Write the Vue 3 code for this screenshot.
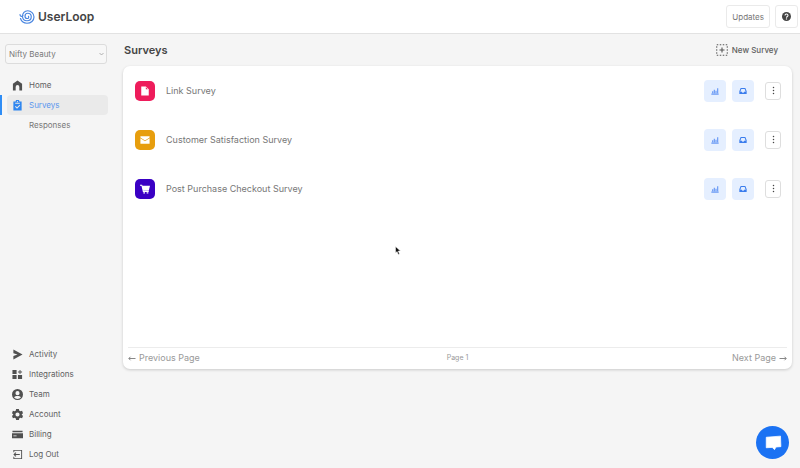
<script setup>
import { ref } from 'vue'

const shop = ref('Nifty Beauty')
const page = ref(1)

const mainLinks = [
  { label: 'Home', icon: 'M12 1 2 8v15h6v-8a4 4 0 0 1 8 0v8h6V8z' },
  {
    label: 'Surveys',
    active: true,
    icon: 'M21 3h-5a4 4 0 0 0-8 0H3v20h18zM12 2a1.400 1.400 0 1 1 0 2.800 1.400 1.400 0 0 1 0-2.800zM7 6h10v2H7zm4 13-4.500-4.500L8 13l3 3 5.500-5.500L18 12z'
  },
  { label: 'Responses' }
]

const bottomLinks = [
  { label: 'Activity', icon: 'M3 1v8l9 3-9 3v8l20-11z' },
  { label: 'Integrations', icon: 'M1 2h9v9H1zM1 13h9v9H1zM13 13h9v9h-9zM16.500 2h2v3.500H22v2h-3.500V11h-2V7.500H13v-2h3.500z' },
  { label: 'Team', icon: 'M12 0a12 12 0 1 0 0 24 12 12 0 0 0 0-24zm0 4.500a4.500 4.500 0 1 1 0 9 4.500 4.500 0 0 1 0-9zM4.500 18c1.500-2 4.500-3 7.500-3s6 1 7.500 3c-2 2.500-4.500 3.600-7.500 3.600S6.500 20.500 4.500 18z' },
  { label: 'Account', icon: 'M9 0h6l1 4 2 1 4-1 2 5-3 3 3 3-2 5-4-1-2 1-1 4H9l-1-4-2-1-4 1-2-5 3-3-3-3 2-5 4 1 2-1zm3 7.500a4.500 4.500 0 1 0 0 9 4.500 4.500 0 0 0 0-9z' },
  { label: 'Billing', icon: 'M1 4h22v3H1zM0 9h24v11H0zM3 14v2h7v-2z' },
  { label: 'Log Out', icon: 'M3 2h19v20H3v-5h2v3h15V4H5v3H3zM8 7l1.500 1.500L7 11h10v2H7l2.500 2.500L8 17l-5-5z' }
]

const surveys = [
  { name: 'Link Survey', color: '#ee1c5b', icon: 'M3 1h11l7 7v15H3zM14 3v5h5z' },
  { name: 'Customer Satisfaction Survey', color: '#e79e0e', icon: 'M1 3h22v3l-11 7L1 6zM1 8l11 7 11-7v13H1z' },
  { name: 'Post Purchase Checkout Survey', color: '#3a00c4', icon: 'M0 2h5l1 2h18l-3 12H8l1 1h12v2H7L3.500 4H0zM8 20h4v3H8zM16 20h4v3h-4z' }
]
</script>

<template>
  <div class="app">
    <header class="topbar">
      <a href="#" class="logo">
        <svg viewBox="0 0 32 28" class="logo-mark">
          <path
            d="M2 9c0 4 4 5 6 2M3 17c2 6 7 9.500 13 9.500 8 0 14-5.500 14-12.500S24 1.500 17.500 1.500C11 1.500 7 7 7 12.500 7 18 11 21.500 16 21.500c5 0 8.500-3.500 8.500-8s-3-7-7-7-5.500 3-5.500 6 2 4.500 4.500 4.500S20 15.500 19 12.500"
            fill="none" stroke="#4a86e0" stroke-width="2.400" stroke-linecap="round"
          />
        </svg>
        <span>UserLoop</span>
      </a>
      <div class="top-actions">
        <button type="button" class="top-button">Updates</button>
        <button type="button" class="top-button help" aria-label="Help">
          <svg viewBox="0 0 24 24">
            <circle cx="12" cy="12" r="12" fill="#444" />
            <path d="M8 9.500C8 4 16 4 16 9c0 3-4 3-4 6" fill="none" stroke="#fff" stroke-width="2.800" />
            <circle cx="12" cy="18.500" r="1.800" fill="#fff" />
          </svg>
        </button>
      </div>
    </header>

    <div class="body">
      <aside class="sidebar">
        <div class="shop-picker">
          <select v-model="shop" aria-label="Shop">
            <option>Nifty Beauty</option>
          </select>
          <svg viewBox="0 0 10 6" class="chevron"><path d="m1 1 4 4 4-4" fill="none" stroke="#999" stroke-width="1.500" /></svg>
        </div>

        <nav class="nav">
          <a v-for="link in mainLinks" :key="link.label" href="#" class="nav-link" :class="{ active: link.active, sub: !link.icon }">
            <span class="nav-icon">
              <svg v-if="link.icon" viewBox="0 0 24 24"><path :d="link.icon" fill="currentColor" fill-rule="evenodd" /></svg>
            </span>
            <span>{{ link.label }}</span>
          </a>
        </nav>

        <nav class="nav nav-bottom">
          <a v-for="link in bottomLinks" :key="link.label" href="#" class="nav-link">
            <span class="nav-icon">
              <svg viewBox="0 0 24 24"><path :d="link.icon" fill="currentColor" fill-rule="evenodd" /></svg>
            </span>
            <span>{{ link.label }}</span>
          </a>
        </nav>
      </aside>

      <main class="main">
        <div class="main-head">
          <h1>Surveys</h1>
          <button type="button" class="new-survey">
            <svg viewBox="0 0 24 24">
              <rect x="1.500" y="1.500" width="21" height="21" fill="none" stroke="#555" stroke-width="2" stroke-dasharray="3 3" />
              <path d="M12 7v10M7 12h10" stroke="#555" stroke-width="2.200" />
            </svg>
            <span>New Survey</span>
          </button>
        </div>

        <section class="card">
          <ul class="survey-list">
            <li v-for="survey in surveys" :key="survey.name" class="survey">
              <span class="survey-icon" :style="{ backgroundColor: survey.color }">
                <svg viewBox="0 0 24 24"><path :d="survey.icon" fill="#fff" fill-rule="evenodd" /></svg>
              </span>
              <a href="#" class="survey-name">{{ survey.name }}</a>
              <div class="survey-actions">
                <button type="button" class="action" aria-label="Results">
                  <svg viewBox="0 0 24 24"><path d="M1 21.500h22M5 19v-6M10 19V8M15 19v-8M20 19V4" fill="none" stroke="#6b9bf5" stroke-width="3.600" /></svg>
                </button>
                <button type="button" class="action" aria-label="Responses">
                  <svg viewBox="0 0 24 24"><path d="M5 3h14l4 10v8H1v-8zM7 6l-3 8h5l1 3h4l1-3h5l-3-8z" fill="#3b7ded" fill-rule="evenodd" /></svg>
                </button>
                <button type="button" class="more" aria-label="More">
                  <svg viewBox="0 0 4 12"><circle cx="2" cy="2" r="1" /><circle cx="2" cy="6" r="1" /><circle cx="2" cy="10" r="1" /></svg>
                </button>
              </div>
            </li>
          </ul>

          <footer class="pager">
            <button type="button" class="pager-link">
              <svg viewBox="0 0 16 10"><path d="M15 5H2M5 1.500 1.500 5 5 8.500" /></svg>
              <span>Previous Page</span>
            </button>
            <span class="pager-page">Page {{ page }}</span>
            <button type="button" class="pager-link next">
              <span>Next Page</span>
              <svg viewBox="0 0 16 10"><path d="M1 5h13M11 1.500 14.500 5 11 8.500" /></svg>
            </button>
          </footer>
        </section>
      </main>
    </div>

    <button type="button" class="chat" aria-label="Open chat">
      <svg viewBox="0 0 24 20"><path d="M3 3 22 1.500l.5 14-6.500.5-2 3.500-3-3-8 .5z" fill="#fff" stroke="#fff" stroke-linejoin="round" /></svg>
    </button>

    <!-- Mouse pointer -->
    <svg class="cursor" viewBox="0 0 12 18">
      <path d="M1 1v13l3-3 2.500 6 2.500-1-2.500-6H11z" fill="#111" stroke="#fff" />
    </svg>
  </div>
</template>

<style>
body { background: #f5f5f5; }
</style>

<style scoped>
*, *::after, *::before { box-sizing: border-box; margin: 0; padding: 0; }

.app {
  position: relative;
  display: flex; flex-direction: column;
  min-height: 100vh;
  background: #f5f5f5; color: #606060;
  font-family: 'Inter', 'Liberation Sans', sans-serif;
  font-size: 8px; line-height: 12px;
}
svg { display: block; }
a { color: inherit; text-decoration: none; }
button { font: inherit; color: inherit; background: none; border: none; cursor: pointer; }

/* Header */
.topbar {
  display: flex; align-items: center; justify-content: space-between;
  height: 34px; padding: 0 2px 0 19px;
  background: #fff; border-bottom: 1px solid #e2e2e2;
}
.logo {
  display: flex; align-items: center; gap: 3px;
  font-size: 12px; font-weight: 600; color: #444;
}
.logo-mark { width: 16px; height: 14px; }
.top-actions { display: flex; gap: 5px; }
.top-button {
  display: flex; align-items: center; justify-content: center;
  height: 23px; padding: 0 5px;
  background: #fff; border: 1px solid #eaeaea; border-radius: 3px; color: #777;
}
.help { width: 23px; }
.help svg { width: 9px; height: 9px; }

/* Sidebar */
.body { display: flex; flex: 1; }
.sidebar {
  display: flex; flex-direction: column; flex: none;
  width: 108px; padding: 10px 0 4px;
}
.shop-picker { position: relative; margin: 0 1px 11px 5px; }
.shop-picker select {
  display: block; appearance: none;
  width: 100%; height: 20px; padding: 0 12px 0 3px;
  font: inherit; color: #777;
  background: #f7f7f7; border: 1px solid #dcdcdc; border-radius: 3px;
}
.chevron { position: absolute; right: 3px; top: 8px; width: 5px; height: 4px; pointer-events: none; }
.nav-link {
  position: relative;
  display: flex; align-items: center; gap: 6px;
  height: 20px; margin-left: 7px; padding-left: 5px;
  border-radius: 4px;
}
.nav-icon { width: 11px; }
.nav-icon svg { width: 11px; height: 11px; color: #505050; }
.nav-link.active { background: #eaeaea; color: #5b97ee; }
.nav-link.active svg { color: #2f86f0; }
.nav-link.active::before {
  content: ''; position: absolute; left: -7px; top: 0;
  width: 2px; height: 100%; background: #2f8df5;
}
.nav-link.sub { color: #777; }
.nav-bottom { margin-top: auto; }

/* Survey list */
.main { flex: 1; min-width: 0; padding: 0 8px 0 15px; }
.main-head {
  display: flex; align-items: center; justify-content: space-between;
  height: 32px; padding: 0 14px 0 1px;
}
.main-head h1 { font-size: 11px; font-weight: 600; color: #444; }
.new-survey { display: flex; align-items: center; gap: 4px; font-weight: 500; }
.new-survey svg { width: 12px; height: 12px; }
.card {
  background: #fff; border-radius: 7px;
  box-shadow: 0 1px 3px rgba(0, 0, 0, 0.18);
  font-size: 9px;
}
.survey-list { min-height: 60vh; list-style: none; }
.survey {
  display: flex; align-items: center;
  height: 49px; padding: 0 11px 0 12px;
}
.survey-icon {
  display: flex; align-items: center; justify-content: center;
  width: 20px; height: 20px; border-radius: 5px;
}
.survey-icon svg { width: 10px; height: 10px; }
.survey-name { margin-left: 11px; color: #777; }
.survey-actions { display: flex; align-items: center; gap: 6px; margin-left: auto; }
.action {
  display: flex; align-items: center; justify-content: center;
  width: 22px; height: 22px; border-radius: 4px; background: #e5efff;
}
.action svg { width: 8px; height: 8px; }
.more {
  display: flex; align-items: center; justify-content: center;
  width: 16px; height: 18px; margin-left: 5px;
  border: 1px solid #dedede; border-radius: 3px;
}
.more svg { width: 3px; height: 9px; fill: #444; }

/* Pager */
.pager {
  display: grid; grid-template-columns: 1fr auto 1fr; align-items: center;
  height: 22px; margin: 0 5px; border-top: 1px solid #ececec;
  color: #999;
}
.pager-link { display: flex; align-items: center; gap: 3px; }
.pager-link.next { justify-self: end; }
.pager-link svg { width: 8px; height: 5px; fill: none; stroke: #888; stroke-width: 2; }
.pager-page { font-size: 7px; }

.chat {
  position: fixed; right: 11px; bottom: 9px;
  display: flex; align-items: center; justify-content: center;
  width: 33px; height: 33px; border-radius: 50%; background: #1b72f3;
}
.chat svg { width: 18px; height: 15px; }
.cursor { position: absolute; left: 395px; top: 246px; width: 6px; height: 9px; pointer-events: none; }
</style>
